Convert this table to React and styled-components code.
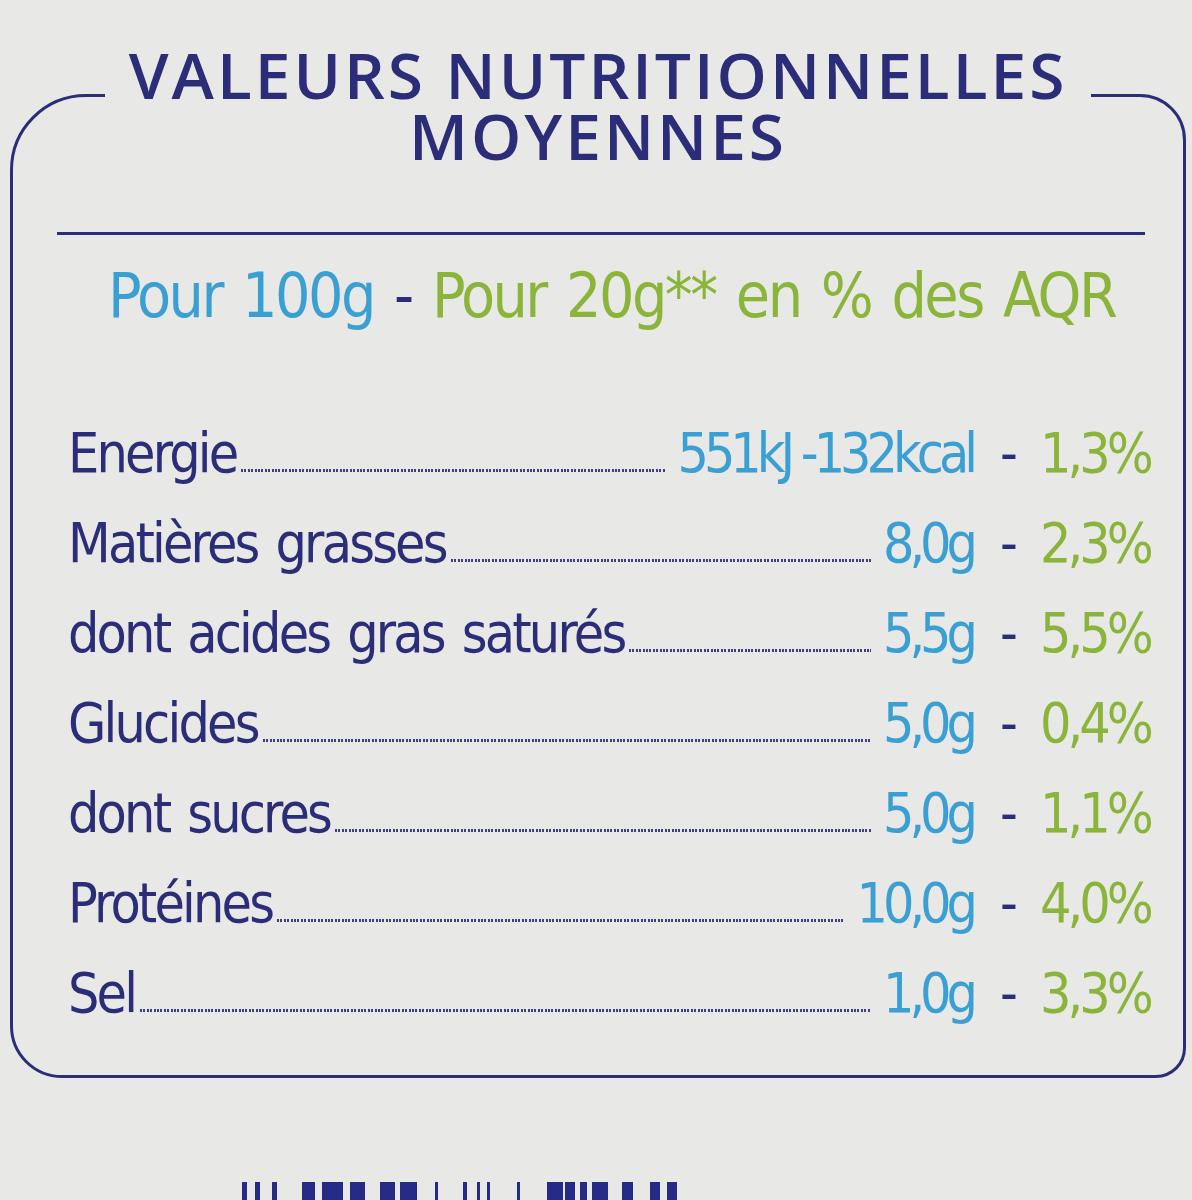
import React from "react";
import styled, { createGlobalStyle } from "styled-components";

const NAVY = "#2c2d78";
const BLUE = "#3a9fd2";
const GREEN = "#8ab43a";
const PAPER = "#e8e8e6";

const GlobalStyle = createGlobalStyle`
  html, body {
    margin: 0;
    padding: 0;
    background: ${PAPER};
  }
  body {
    font-family: "DejaVu Sans Condensed", "DejaVu Sans", sans-serif;
    font-stretch: condensed;
    overflow: hidden;
  }
`;

const rows = [
  { label: "Energie", value: "551kJ -132kcal", pct: "1,3%" },
  { label: "Matières grasses", value: "8,0g", pct: "2,3%" },
  { label: "dont acides gras saturés", value: "5,5g", pct: "5,5%" },
  { label: "Glucides", value: "5,0g", pct: "0,4%" },
  { label: "dont sucres", value: "5,0g", pct: "1,1%" },
  { label: "Protéines", value: "10,0g", pct: "4,0%" },
  { label: "Sel", value: "1,0g", pct: "3,3%" },
];

// bars of the barcode peeking in at the bottom edge: [x, width]
const bars = [
  [2, 5], [15, 5], [32, 5], [62, 13], [82, 21], [110, 15], [140, 15],
  [160, 17], [195, 3], [223, 4], [237, 3], [247, 3], [277, 3], [307, 16],
  [325, 10], [340, 7], [352, 16], [382, 11], [410, 10], [427, 10],
];

export default function App() {
  return (
    <>
      <GlobalStyle />
      <Page>
        <Panel>
          <Title>
            <TitleLine>VALEURS NUTRITIONNELLES</TitleLine>
            <TitleLine>MOYENNES</TitleLine>
          </Title>
          <Divider />
          <SubHeader>
            <Blue>Pour 100g</Blue>
            <Sep> - </Sep>
            <Green>Pour 20g** en % des AQR</Green>
          </SubHeader>
          <Table>
            {rows.map((r) => (
              <Row key={r.label}>
                <Label>{r.label}</Label>
                <Leader />
                <Value>{r.value}</Value>
                <Dash>-</Dash>
                <Pct>{r.pct}</Pct>
              </Row>
            ))}
          </Table>
        </Panel>
        <Barcode width="460" height="30" viewBox="0 0 460 30">
          {bars.map(([x, w]) => (
            <rect key={x} x={x} y="0" width={w} height="30" fill="#242a86" />
          ))}
        </Barcode>
      </Page>
    </>
  );
}

const Page = styled.div`
  width: 1192px;
  height: 1200px;
  overflow: hidden;
  display: flex;
  flex-direction: column;
`;

const Panel = styled.section`
  box-sizing: border-box;
  flex-shrink: 0;
  margin: 94px 6px 0 10px;
  height: 984px;
  border: 3px solid ${NAVY};
  border-radius: 76px 46px 30px 52px;
  display: flex;
  flex-direction: column;
`;

const Title = styled.h1`
  align-self: center;
  margin: -53px 0 0 0;
  padding: 0 24px;
  background: ${PAPER};
  font-family: "Open Sans", "Liberation Sans", sans-serif;
  font-stretch: normal;
  font-weight: 600;
  font-size: 64px;
  letter-spacing: 3px;
  color: ${NAVY};
  text-align: center;
`;

const TitleLine = styled.span`
  display: block;
  height: 61px;
  line-height: 61px;
`;

const Divider = styled.hr`
  margin: 66px 38px 0 44px;
  height: 3px;
  border: none;
  background: ${NAVY};
`;

const SubHeader = styled.div`
  margin: 30px 0 0 95px;
  font-size: 62px;
  line-height: 62px;
  letter-spacing: -2.5px;
  word-spacing: 5px;
  white-space: nowrap;
`;

const Blue = styled.span`
  color: ${BLUE};
`;

const Green = styled.span`
  color: ${GREEN};
`;

const Sep = styled.span`
  color: ${NAVY};
`;

const Table = styled.div`
  margin: 81px 33px 0 55px;
  display: flex;
  flex-direction: column;
`;

const Row = styled.div`
  display: flex;
  align-items: baseline;
  height: 90px;
  font-size: 55px;
  line-height: 90px;
  white-space: nowrap;
`;

const Label = styled.span`
  color: ${NAVY};
  letter-spacing: -2.8px;
  word-spacing: 5px;
`;

const Leader = styled.span`
  flex: 1;
  height: 3px;
  margin: 0 12px 0 5px;
  background: repeating-linear-gradient(
    90deg,
    ${NAVY} 0 2px,
    transparent 2px 3.4px
  );
  opacity: 0.9;
`;

const Value = styled.span`
  color: ${BLUE};
  letter-spacing: -5px;
  word-spacing: 0px;
  padding-right: 5px;
`;

const Dash = styled.span`
  width: 62px;
  text-align: center;
  color: ${NAVY};
`;

const Pct = styled.span`
  width: 110px;
  color: ${GREEN};
  letter-spacing: -4px;
`;

const Barcode = styled.svg`
  display: block;
  flex-shrink: 0;
  margin: 104px 0 0 240px;
`;
